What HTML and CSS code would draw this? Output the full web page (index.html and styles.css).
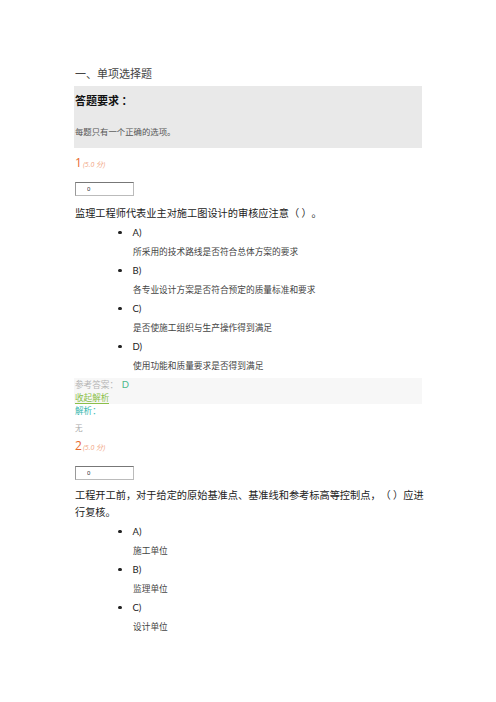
FILE: index.html
```html
<!DOCTYPE html>
<html lang="zh-CN">
<head>
    <meta charset="UTF-8">
    <meta name="viewport" content="width=device-width, initial-scale=1.0">
    <title>单项选择题</title>
    <link rel="stylesheet" href="styles.css">
</head>
<body>
    <div class="page">
        <h2 class="section-title">一、单项选择题</h2>

        <div class="require">
            <div class="require-title">答题要求 ：</div>
            <div class="require-text">每题只有一个正确的选项。</div>
        </div>

        <div class="question">
            <div class="q-num">1<span class="q-score">(5.0 分)</span></div>
            <input class="q-input" type="text" value="0" readonly>
            <p class="q-text">监理工程师代表业主对施工图设计的审核应注意（ ）。</p>
            <ul class="options">
                <li><div class="opt-head"><span class="dot"></span>A)</div><div class="opt-text">所采用的技术路线是否符合总体方案的要求</div></li>
                <li><div class="opt-head"><span class="dot"></span>B)</div><div class="opt-text">各专业设计方案是否符合预定的质量标准和要求</div></li>
                <li><div class="opt-head"><span class="dot"></span>C)</div><div class="opt-text">是否使施工组织与生产操作得到满足</div></li>
                <li><div class="opt-head"><span class="dot"></span>D)</div><div class="opt-text">使用功能和质量要求是否得到满足</div></li>
            </ul>
            <div class="answer">
                <div class="answer-row">参考答案：&nbsp; <span class="answer-key">D</span></div>
                <a class="toggle" href="#">收起解析</a>
            </div>
            <div class="analysis-title">解析：</div>
            <div class="analysis-text">无</div>
        </div>

        <div class="question">
            <div class="q-num">2<span class="q-score">(5.0 分)</span></div>
            <input class="q-input" type="text" value="0" readonly>
            <p class="q-text">工程开工前，对于给定的原始基准点、基准线和参考标高等控制点，（ ）应进行复核。</p>
            <ul class="options">
                <li><div class="opt-head"><span class="dot"></span>A)</div><div class="opt-text">施工单位</div></li>
                <li><div class="opt-head"><span class="dot"></span>B)</div><div class="opt-text">监理单位</div></li>
                <li><div class="opt-head"><span class="dot"></span>C)</div><div class="opt-text">设计单位</div></li>
            </ul>
        </div>
    </div>
</body>
</html>
```

FILE: styles.css
```css
body{
    margin: 0;
    padding: 0;
    background: #fff;
    font-family: "Noto Sans CJK SC", "Liberation Serif", serif;
    color: #222;
    text-spacing-trim: space-all;
}
.page{
    width: 348px;
    padding: 65px 0 0 74px;
}
.section-title{
    margin: 0 0 5px 1px;
    font-size: 11px;
    line-height: 16px;
    font-weight: 400;
    color: #444;
}
.require{
    background: #e9e9e9;
    height: 62px;
    box-sizing: border-box;
    padding: 6px 0 0 1px;
}
.require-title{
    font-size: 11px;
    line-height: 16px;
    font-weight: 700;
    color: #111;
}
.require-text{
    margin-top: 15px;
    font-size: 8.4px;
    line-height: 16px;
    color: #555;
}
.question{
    padding-left: 1px;
}
.q-num{
    margin-top: 7px;
    font-family: "Open Sans", "Liberation Sans", sans-serif;
    font-size: 12px;
    line-height: 16px;
    color: #e8692e;
}
.q-score{
    font-size: 7px;
    font-style: italic;
    color: #f2a583;
    margin-left: 1px;
}
.q-input{
    display: block;
    margin: 9px 0 0 0;
    width: 59px;
    height: 14px;
    box-sizing: border-box;
    padding: 0 0 0 11px;
    border: 1px solid #bbb;
    border-top-color: #777;
    border-left-color: #999;
    font-family: "Liberation Sans", sans-serif;
    font-size: 6px;
    line-height: 12px;
    color: #333;
    background: #fff;
}
.q-text{
    margin: 8px -10px 0 0;
    font-size: 10.2px;
    line-height: 17px;
    color: #222;
}
.options{
    list-style: none;
    margin: 2px 0 0 0;
    padding: 0;
}
.opt-head{
    display: flex;
    align-items: center;
    gap: 11px;
    padding-left: 43px;
    height: 19px;
    font-family: Lato, "Liberation Sans", sans-serif;
    font-size: 9.5px;
    color: #222;
}
.dot{
    width: 3.5px;
    height: 3.5px;
    border-radius: 50%;
    background: #222;
}
.opt-text{
    padding-left: 58px;
    font-size: 8.7px;
    line-height: 19px;
    color: #444;
}
.answer{
    margin: 3px 0 0 -1px;
    padding-left: 1px;
    background: #f7f7f7;
    height: 26px;
    display: flex;
    flex-direction: column;
    align-items: flex-start;
}
.answer-row{
    font-size: 8.6px;
    line-height: 13px;
    color: #b5b5b5;
}
.answer-key{
    font-family: Lato, "Liberation Sans", sans-serif;
    font-size: 9.5px;
    color: #4cb88a;
}
.toggle{
    font-size: 8.6px;
    line-height: 12px;
    color: #8bbf4a;
    text-decoration: none;
    border-bottom: 1px solid #8bbf4a;
}
.analysis-title{
    font-size: 8.6px;
    line-height: 13px;
    color: #35b8b0;
}
.analysis-text{
    margin-top: 4px;
    font-size: 7.6px;
    line-height: 13px;
    color: #aaa;
}
.question + .question .q-num{
    margin-top: 4px;
}
.question + .question .q-input{
    margin-top: 10px;
}
.question + .question .q-text{
    margin-top: 6px;
}
```
